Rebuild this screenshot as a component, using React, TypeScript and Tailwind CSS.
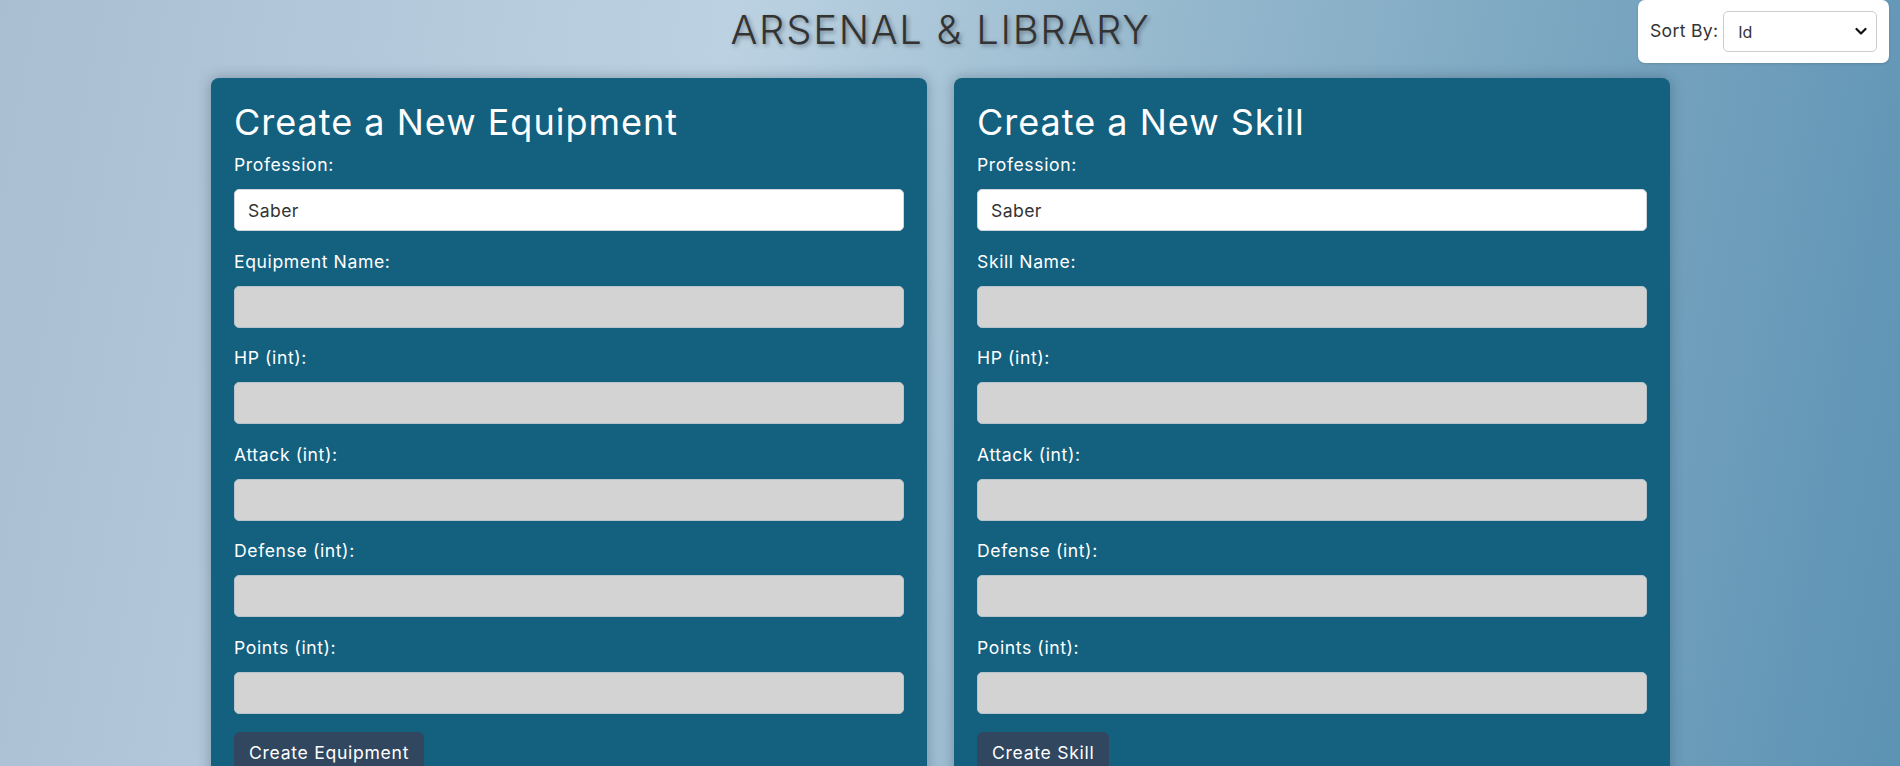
import React, { useState } from "react";

interface Field {
  key: string;
  label: string;
}

interface FormCardProps {
  title: string;
  nameLabel: string;
  buttonText: string;
}

const statFields: Field[] = [
  { key: "hp", label: "HP (int):" },
  { key: "attack", label: "Attack (int):" },
  { key: "defense", label: "Defense (int):" },
  { key: "points", label: "Points (int):" },
];

const FormCard: React.FC<FormCardProps> = ({ title, nameLabel, buttonText }) => {
  const [values, setValues] = useState<Record<string, string>>({ profession: "Saber" });

  const fields: Field[] = [{ key: "name", label: nameLabel }, ...statFields];

  const update = (key: string, value: string) => {
    setValues(prev => ({ ...prev, [key]: value }));
  };

  return (
    <div className="w-[716px] bg-[#13607f] rounded-lg px-[23px] pt-[22px] pb-6 shadow-[0_0_14px_rgba(30,50,70,0.35)]">
      <h2 className="text-[36px] leading-[44px] font-normal text-white tracking-[1px]">{title}</h2>

      <label className="block mt-[10px] text-[17.6px] leading-[22px] text-white tracking-[0.6px]">Profession:</label>
      <input
        type="text"
        value={values.profession}
        onChange={(e) => update("profession", e.target.value)}
        className="block w-full h-[42px] mt-[13px] mb-[19.5px] px-[13px] rounded-[5px] border border-[#cfd6db] bg-white text-[17.6px] text-[#333] tracking-[0.4px] focus:outline-none"
      />

      {fields.map((field) => (
        <div key={field.key}>
          <label className="block text-[17.6px] leading-[22px] text-white tracking-[0.6px]">{field.label}</label>
          <input
            type="text"
            value={values[field.key] ?? ""}
            onChange={(e) => update(field.key, e.target.value)}
            className="block w-full h-[42px] mt-[13px] mb-[19.5px] px-[13px] rounded-[5px] border border-[#b9c3ca] bg-[#d3d3d3] text-[17.6px] text-[#333] focus:outline-none"
          />
        </div>
      ))}

      <button className="mt-[-1px] px-[15px] py-[10px] rounded-[6px] bg-[#31465f] text-white text-[17.6px] leading-[22px] tracking-[0.7px] hover:bg-[#263a50]">
        {buttonText}
      </button>
    </div>
  );
};

const App: React.FC = () => {
  const [sortBy, setSortBy] = useState("Id");

  return (
    <div className="relative min-h-screen pr-[19px] bg-[linear-gradient(100deg,#aabed2_0%,#bcd2e2_36%,#95b8cd_58%,#5c92b3_100%)] font-['Inter',sans-serif]">
      {/* Sort control */}
      <div className="absolute top-0 right-[11px] w-[251px] h-[63px] bg-white rounded-[7px] flex items-center pl-[12px] gap-[5px] shadow-sm">
        <span className="text-[17.6px] text-[#333] tracking-[0.3px]">Sort By:</span>
        <div className="relative">
          <select
            value={sortBy}
            onChange={(e) => setSortBy(e.target.value)}
            className="appearance-none w-[154px] h-[41px] pl-[14px] pr-8 border border-[#cccccc] rounded-[5px] bg-white text-[16px] text-[#333] focus:outline-none"
          >
            <option>Id</option>
            <option>Name</option>
            <option>Profession</option>
          </select>
          <svg className="pointer-events-none absolute right-[10px] top-[16px] w-[12px] h-[9px]" viewBox="0 0 12 9" fill="none" stroke="#111" strokeWidth={2.2} strokeLinecap="round" strokeLinejoin="round">
            <path d="M1.5 2 L6 6.5 L10.5 2" />
          </svg>
        </div>
      </div>

      <h1 className="pt-[6px] text-center text-[40px] leading-[48px] font-light text-[#333] tracking-[1.7px] [text-shadow:2px_2px_4px_rgba(0,0,0,0.35)]">
        ARSENAL &amp; LIBRARY
      </h1>

      <div className="flex justify-center gap-[27px] mt-[24px]">
        <FormCard title="Create a New Equipment" nameLabel="Equipment Name:" buttonText="Create Equipment" />
        <FormCard title="Create a New Skill" nameLabel="Skill Name:" buttonText="Create Skill" />
      </div>
    </div>
  );
};

export default App;
